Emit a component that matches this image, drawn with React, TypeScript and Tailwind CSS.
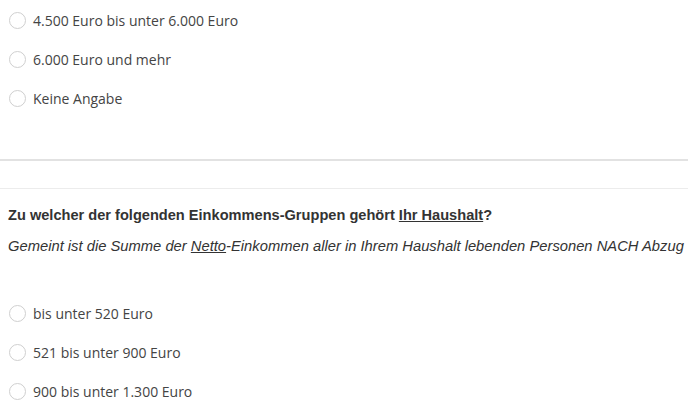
import React from 'react'

const topOptions = ['4.500 Euro bis unter 6.000 Euro', '6.000 Euro und mehr', 'Keine Angabe']
const bottomOptions = ['bis unter 520 Euro', '521 bis unter 900 Euro', '900 bis unter 1.300 Euro']

const Option: React.FC<{ label: string }> = ({ label }) => (
  <label className="flex h-[39px] items-center pl-[9px]">
    <span className="h-[17px] w-[17px] shrink-0 rounded-full border border-[#cfcfcf] bg-white" />
    <span className="ml-[7px] text-[14px] text-[#444] [font-family:'Open_Sans',sans-serif]">{label}</span>
  </label>
)

const App: React.FC = () => {
  return (
    <div className="h-[406px] w-[688px] overflow-hidden bg-white">
      {/* previous question answers */}
      <div className="pt-[0.5px]">
        {topOptions.map((o) => (
          <Option key={o} label={o} />
        ))}
      </div>

      <div className="mt-[41.5px] h-[2px] bg-[#e2e2e2]" />
      <div className="mt-[27px] h-px bg-[#ececec]" />

      {/* next question */}
      <div className="px-[8px] pt-[16px] [font-family:'Liberation_Sans',Arial,sans-serif] text-[#333]">
        <h2 className="whitespace-nowrap text-[14.6px] font-bold leading-[20px]">
          Zu welcher der folgenden Einkommens-Gruppen gehört <span className="underline">Ihr Haushalt</span>?
        </h2>
        <p className="mt-[11px] whitespace-nowrap text-[14.75px] italic leading-[20px]">
          Gemeint ist die Summe der <span className="underline">Netto</span>-Einkommen aller in Ihrem Haushalt lebenden Personen NACH Abzug von Steuern und Sozialversicherungsbeiträgen.
        </p>
      </div>

      <div className="mt-[38px]">
        {bottomOptions.map((o) => (
          <Option key={o} label={o} />
        ))}
      </div>
    </div>
  )
}

export default App
